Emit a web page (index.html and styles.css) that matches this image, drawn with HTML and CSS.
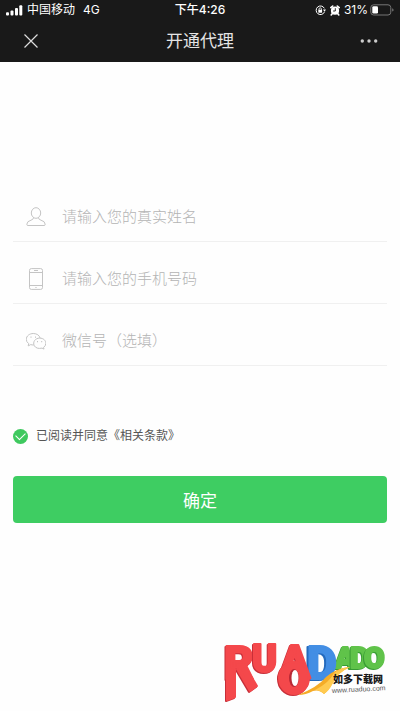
FILE: index.html
```html
<!DOCTYPE html>
<html lang="zh-CN">
<head>
<meta charset="utf-8">
<meta name="viewport" content="width=device-width, initial-scale=1">
<title>开通代理</title>
<link rel="stylesheet" href="styles.css">
</head>
<body>
<header class="top">
  <div class="status">
    <div class="status-left">
      <svg class="signal" width="17" height="11" viewBox="0 0 17 11" fill="#fff" aria-hidden="true">
        <rect x="0" y="7.300" width="3" height="3.200" rx="1"/>
        <rect x="4.500" y="5.500" width="3" height="5" rx="1"/>
        <rect x="9" y="3" width="3" height="7.500" rx="1"/>
        <rect x="13.300" y="0.300" width="3" height="10.200" rx="1"/>
      </svg>
      <span>中国移动</span>
      <span class="network">4G</span>
    </div>
    <span class="time">下午4:26</span>
    <div class="status-right">
      <svg width="11" height="11" viewBox="0 0 11 11" aria-hidden="true">
        <path d="M9.300 3.300A4.300 4.300 0 1 0 9.500 6.800" fill="none" stroke="#fff"/>
        <path d="M8 4.500h3L9.500 6.700z" fill="#fff"/>
        <rect x="3.300" y="4.700" width="3.800" height="3" rx=".4" fill="#fff"/>
        <path d="M4 5V4a1.200 1.200 0 0 1 2.400 0v1" fill="none" stroke="#fff" stroke-width=".8"/>
      </svg>
      <svg width="10" height="11" viewBox="0 0 10 11" aria-hidden="true">
        <circle cx="5" cy="5.700" r="4.100" fill="#fff"/>
        <path d="M.8 2.600L2.700 1M9.200 2.600L7.300 1M2.200 8.800L1.200 10M7.800 8.800l1 1.200" stroke="#fff" stroke-width="1.600" stroke-linecap="round"/>
        <path d="M5.300 3.200v2.800H3.100" fill="none" stroke="#191919" stroke-width=".9"/>
      </svg>
      <span>31%</span>
      <svg class="battery" width="24" height="12" viewBox="0 0 24 12" aria-hidden="true">
        <rect x=".8" y=".8" width="20" height="10.200" rx="2.800" fill="none" stroke="#777"/>
        <rect x="2.300" y="2.300" width="5.700" height="7.200" rx="1.300" fill="#fff"/>
        <path d="M22.200 4.200q1.400.5 1.400 1.700t-1.400 1.700z" fill="#777"/>
      </svg>
    </div>
  </div>
  <nav class="nav">
    <button class="nav-button" type="button" aria-label="关闭">
      <svg width="14" height="14" viewBox="0 0 14 14" aria-hidden="true"><path d="M.5.500l13 13M13.500.500l-13 13" stroke="#ddd" stroke-width="1.200"/></svg>
    </button>
    <h1 class="title">开通代理</h1>
    <button class="nav-button" type="button" aria-label="更多">
      <svg width="18" height="4" viewBox="0 0 18 4" fill="#ccc" aria-hidden="true"><circle cx="2.300" cy="2" r="1.700"/><circle cx="9" cy="2" r="1.700"/><circle cx="15.700" cy="2" r="1.700"/></svg>
    </button>
  </nav>
</header>
<main class="page">
  <form class="form">
    <label class="field">
      <svg class="icon" width="20" height="22" viewBox="0 0 20 22" aria-label="姓名">
        <ellipse cx="10" cy="7" rx="4.700" ry="5.300"/>
        <path d="M7.500 11.900Q7.400 13.500 5 14.200 1 15.200.8 18.300q0 1.200 1.200 1.200h16q1.200 0 1.200-1.200-.2-3.100-4.200-4.100-2.400-.7-2.500-2.300"/>
      </svg>
      <input class="input" type="text" placeholder="请输入您的真实姓名">
    </label>
    <label class="field">
      <svg class="icon" width="20" height="22" viewBox="0 0 20 22" aria-label="手机">
        <rect x="3.500" y=".6" width="13" height="20.800" rx="1.800"/>
        <path d="M3.500 4.500h13M3.500 17.500h13M8 2.500h4M9.400 19.500h1.200"/>
      </svg>
      <input class="input" type="tel" placeholder="请输入您的手机号码">
    </label>
    <label class="field">
      <svg class="icon" width="20" height="22" viewBox="0 0 20 22" aria-label="微信">
        <path d="M7.700 14.900q-1.500.2-3-.3l-2.500 1.300.5-2.300Q.3 12 .3 9.300C.3 6 3.500 3.500 7.300 3.500c3.500 0 6.300 1.900 6.800 4.600"/>
        <path d="M17.600 17.400l.4 1.700-2-1q-5.400 1.200-7.700-2.300c-2-4 1.200-7.700 5.300-7.700s6.200 2.600 6.200 5.300q0 2.400-2.200 4z"/>
        <path d="M4.500 7.100h1M9 7.100h1M11 11.600h1M15.200 11.600h1" stroke-width="1.300"/>
      </svg>
      <input class="input" type="text" placeholder="微信号（选填）">
    </label>
    <label class="agree">
      <input class="check" type="checkbox" checked>
      <span>已阅读并同意《相关条款》</span>
    </label>
    <button class="submit" type="button">确定</button>
  </form>
  <svg class="logo" width="164" height="70" viewBox="0 0 164 70" role="img" aria-label="RUADADUO 如多下载网 www.ruaduo.com">
    <g class="letters">
      <g class="green">
        <text class="s30" x="112" y="35">A</text>
        <text class="s30" x="127" y="35">D</text>
        <text class="s30" x="141" y="35">O</text>
      </g>
      <g class="blue"><text class="s46" x="84" y="46">D</text></g>
      <g class="red">
        <g>
          <path d="M4 36h8v28l-8 3z"/>
          <path d="M14 36l8-3 12 20-7 5z"/>
          <text class="s46" x="1" y="46">R</text>
        </g>
        <text class="s38" x="29" y="39">U</text>
        <text class="s46" x="56" y="45">A</text>
        <ellipse cx="71" cy="45" rx="15" ry="16"/>
      </g>
    </g>
    <ellipse cx="71" cy="45" rx="5" ry="9" fill="#b82935"/>
    <ellipse cx="72" cy="45" rx="3.500" ry="8" fill="#fff"/>
    <path d="M75 62Q95 54 103 44q10-9 24-10-14 6-18 17-5 8-8 10-5-5-11-3-7 4-15 4z" fill="#f5ac27"/>
    <path d="M101 61q-4-4-9-4 14-7 19-17 7-6 16-6-13 6-17 16-4 8-9 11z" fill="#ffca50"/>
    <text class="brand" x="110" y="50">如多下载网</text>
    <text class="site" x="109" y="60" transform="rotate(-3 109 60)">www.ruaduo.com</text>
  </svg>
</main>
</body>
</html>
```
FILE: styles.css
```css
* {
  box-sizing: border-box;
}

body {
  display: flex;
  flex-direction: column;
  min-height: 100vh;
  margin: 0;
  background: #fefefe;
  color: #555;
  font-family: Inter, "Noto Sans CJK SC", sans-serif;
}

button {
  padding: 0;
  border: 0;
  font: inherit;
  cursor: pointer;
}

.top {
  padding: 0 6px;
  background: #191919;
  color: #fff;
}

.status {
  display: grid;
  grid-template-columns: 1fr auto 1fr;
  align-items: center;
  height: 20px;
  font-size: 12px;
  line-height: 20px;
}

.status-left,
.status-right {
  display: flex;
  align-items: center;
  gap: 4px;
}

.status-right {
  justify-content: flex-end;
}

.network {
  margin-left: 4px;
}

.time {
  font-weight: 500;
}

.battery {
  margin-left: -2px;
}

.nav {
  display: flex;
  align-items: center;
  justify-content: space-between;
  height: 42px;
}

.nav-button {
  display: flex;
  align-items: center;
  justify-content: center;
  width: 50px;
  height: 42px;
  background: none;
}

.title {
  margin: 0;
  color: #e4e4e4;
  font-size: 17px;
  font-weight: 400;
  line-height: 42px;
}

.page {
  display: flex;
  flex: 1;
  flex-direction: column;
  padding: 118px 13px 0;
}

.form {
  display: flex;
  flex-direction: column;
}

.field {
  display: flex;
  align-items: center;
  gap: 16px;
  height: 62px;
  padding: 12px 13px 0;
  border-bottom: 1px solid #f0f0f0;
}

.icon {
  flex: none;
  fill: none;
  stroke: #c4c4c4;
  stroke-width: 1;
}

.input {
  flex: 1;
  min-width: 0;
  padding: 0;
  border: 0;
  outline: 0;
  background: none;
  color: #555;
  font: 300 15px/24px Inter, "Noto Sans CJK SC", sans-serif;
}

.input::placeholder {
  color: #b4b4b4;
  opacity: 1;
}

.agree {
  display: flex;
  align-items: center;
  gap: 8px;
  margin-top: 60px;
  font-size: 12px;
  line-height: 20px;
}

.check {
  display: grid;
  place-items: center;
  width: 15px;
  height: 15px;
  margin: 0;
  border-radius: 50%;
  background: #ccc;
  appearance: none;
}

.check:checked {
  background: #3fc95f;
}

.check:checked::before {
  width: 8px;
  height: 5px;
  margin-bottom: 3px;
  border: solid #fff;
  border-width: 0 0 1px 1px;
  content: "";
  transform: rotate(-45deg);
}

.submit {
  height: 47px;
  margin-top: 30px;
  border-radius: 4px;
  background: #3ecd62;
  color: #fff;
  font-size: 17px;
}

.logo {
  align-self: flex-end;
  margin: auto 0 8px;
  overflow: visible;
}

.letters {
  font-family: Roboto, sans-serif;
  font-weight: 900;
  stroke-width: 2;
  stroke-linejoin: round;
}

.s46 { font-size: 46px; }
.s38 { font-size: 38px; }
.s30 { font-size: 30px; }

.red { fill: #f4484b; stroke: #f4484b; }
.blue { fill: #438ee4; stroke: #438ee4; }
.green { fill: #60c34a; stroke: #60c34a; }

.red > * { filter: drop-shadow(-1px 1px 0 #c72e38); }
.blue > * { filter: drop-shadow(-2px 1px 0 #246abd); }
.green > * { filter: drop-shadow(-1px 1px 0 #389b34); }

.brand {
  fill: #181818;
  font-family: "Noto Sans CJK SC", sans-serif;
  font-size: 10px;
  font-weight: 900;
}

.site {
  fill: #555;
  font-family: "Liberation Sans", sans-serif;
  font-size: 7px;
}
```
